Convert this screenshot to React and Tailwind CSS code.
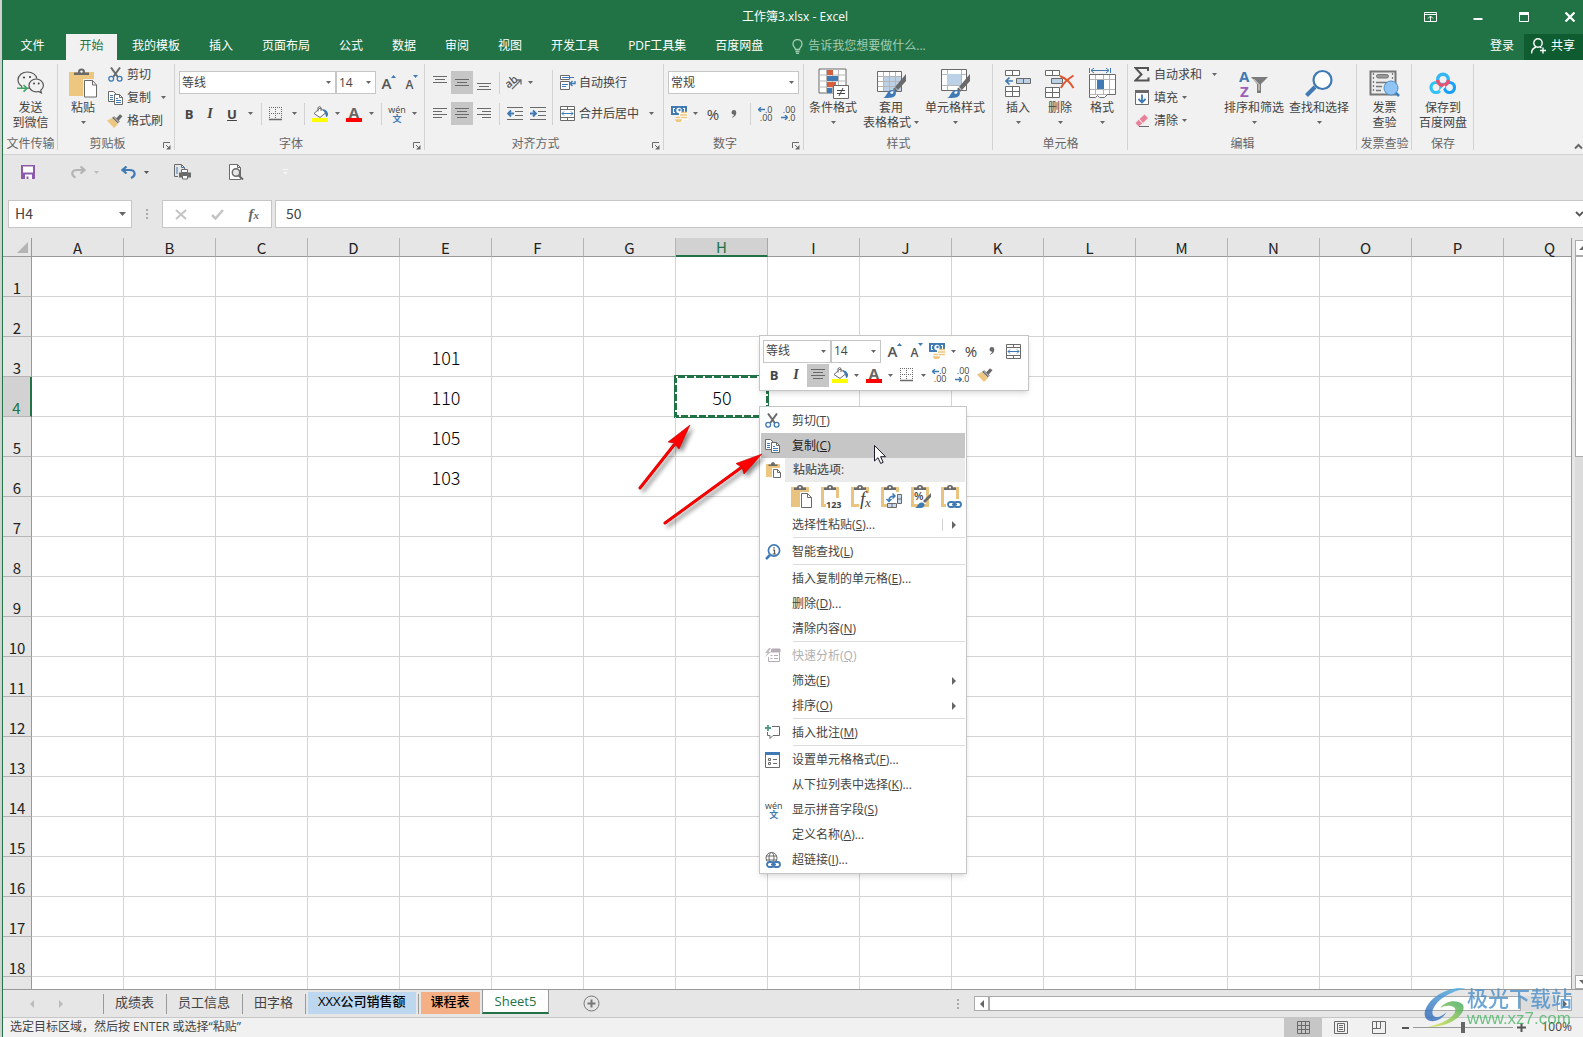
import React from "react";

const GREY = "#6a6a6a";
const BLUE = "#3f7ab5";
const TAN = "#edc67f";

function Icon({ w, h, children, className = "" }) {
  return (
    <svg width={w} height={h} viewBox={`0 0 ${w} ${h}`} fill="none" aria-hidden="true" className={`shrink-0 ${className}`}>
      {children}
    </svg>
  );
}

function Caret({ className = "text-[#666]" }) {
  return (
    <Icon w={5} h={3} className={className}>
      <path d="M0 0h5L2.5 3z" fill="currentColor" />
    </Icon>
  );
}

function Lines({ rows }) {
  return (
    <Icon w={14} h={14}>
      {rows.map(([x1, x2, y]) => (
        <path key={y} d={`M${x1} ${y + 0.5}H${x2}`} stroke={GREY} />
      ))}
    </Icon>
  );
}

const alignTop = [[0, 14, 0], [2, 12, 3], [0, 14, 6]];
const alignMid = [[0, 14, 3], [2, 12, 6], [0, 14, 9]];
const alignBottom = [[0, 14, 7], [2, 12, 10], [0, 14, 13]];
const alignLeft = [[0, 14, 1], [0, 9, 4], [0, 14, 7], [0, 9, 10]];
const alignCenter = [[0, 14, 1], [2, 12, 4], [0, 14, 7], [2, 12, 10]];
const alignRight = [[0, 14, 1], [5, 14, 4], [0, 14, 7], [5, 14, 10]];

function Scissors() {
  return (
    <Icon w={15} h={15}>
      <path d="M3 0.5L9.8 10M12 0.5L5.2 10" stroke={GREY} strokeWidth="2" />
      <circle cx="3.2" cy="11.8" r="2.4" stroke={BLUE} strokeWidth="1.3" />
      <circle cx="11.6" cy="11.8" r="2.4" stroke={BLUE} strokeWidth="1.3" />
    </Icon>
  );
}

function Copy() {
  return (
    <Icon w={15} h={14}>
      <path d="M0.5 0.5h5l3 3v7h-8z" fill="#fff" stroke={GREY} />
      <path d="M2 4.5h3M2 6.5h3M2 8.5h3" stroke={BLUE} />
      <path d="M6.5 3.5h5l3 3v7h-8z" fill="#fff" stroke={GREY} />
      <path d="M11.5 3.5v3h3" stroke={GREY} />
      <path d="M8 7.5h2M8 9.5h5M8 11.5h5" stroke={BLUE} />
    </Icon>
  );
}

function Brush() {
  return (
    <Icon w={16} h={14}>
      <path d="M0 6.5L5 4l6 6-4 4z" fill={TAN} />
      <path d="M5 3.8l2.2-1.5 5.6 5.3-1.9 2z" fill={GREY} />
      <path d="M9 4.5L13 0.3l2.5 2-4 4.4z" fill={GREY} />
      <path d="M6.6 3l5.4 5.4" stroke="#fff" strokeWidth="0.7" />
    </Icon>
  );
}

function PasteBig() {
  return (
    <Icon w={29} h={31}>
      <path d="M0 4h25v24H0z" fill={TAN} />
      <path d="M5 7V4.5h4C9 1.5 10 0.5 12.5 0.5S16 1.5 16 4.5h4V7z" fill={GREY} />
      <circle cx="12.5" cy="3.6" r="1.2" fill="#fff" />
      <path d="M14 11h11l4 4v16H14z" fill="#f1f1f1" />
      <path d="M15.5 12.5h8l4 4.5v12h-12z" fill="#fff" stroke={GREY} />
      <path d="M23.5 12.5V17h4" stroke={GREY} />
    </Icon>
  );
}

function PasteSmall() {
  return (
    <Icon w={15} h={16}>
      <path d="M0 2h14v13H0z" fill={TAN} />
      <path d="M2.500 4V2.500H5C5 0.800 5.800 0.300 7 0.300S9 0.800 9 2.500h2.500V4z" fill={GREY} />
      <path d="M6 6h9v10H6z" fill="#fff" />
      <path d="M7.500 7.500h4l3 3v5h-7z M11.500 7.500v3h3" fill="#fff" stroke={GREY} />
    </Icon>
  );
}

function WeChat() {
  return (
    <Icon w={28} h={26}>
      <path d="M5 15.500C2.500 13.800 1 11.500 1 9c0-4.600 4.300-8 9.500-8 4.800 0 8.700 2.800 9.400 6.600" stroke="#555" strokeWidth="1.200" />
      <path d="M8.500 17.200c2 .3 3 .1 3.800-.2M5 15.500L4.500 17" stroke="#555" strokeWidth="1.200" />
      <path d="M12 14.500c0-3.700 3.300-6.500 7.200-6.500s7.200 2.800 7.200 6.500c0 2.200-1.100 3.700-2.600 4.800l.6 2.600-3-1.400c-5 1.300-9.400-2-9.400-6z" stroke="#555" strokeWidth="1.200" />
      <circle cx="7" cy="6.500" r="1" fill="#333" />
      <circle cx="13" cy="6" r="1" fill="#333" />
      <circle cx="17" cy="12.500" r="0.900" fill="#333" />
      <circle cx="21.700" cy="12.500" r="0.900" fill="#333" />
      <path d="M0 17.300h9.500M6.500 14l3.500 3.300-3.500 3.300" stroke="#3fa565" strokeWidth="1.600" />
    </Icon>
  );
}

function Borders() {
  return (
    <Icon w={14} h={14}>
      <path d="M0.500 0v13M6.500 0v13M12.500 0v13M0 0.500h13M0 6.500h13" stroke={GREY} strokeDasharray="1 1" />
      <path d="M0 12.500h13" stroke={GREY} strokeWidth="1.500" />
    </Icon>
  );
}

function Bucket() {
  return (
    <Icon w={17} h={16}>
      <path d="M2 7.500L8 2l6 4.500-6 5z" fill="#fff" stroke={GREY} />
      <path d="M6 5.500V2C6 .2 9 .2 9 2v3" stroke={GREY} />
      <path d="M10.500 3.200c3.500 0 5 2.300 5.500 4.300.3 1.500-.5 3.500-1.700 3.500-.9-2-1-4.500-3.800-7.800z" fill={BLUE} />
      <path d="M0 12h16v4H0z" fill="#ffff00" />
    </Icon>
  );
}

function FontColor() {
  return (
    <span className="flex w-4 shrink-0 flex-col items-center">
      <span className="h-3 text-[15px] leading-3 font-bold text-[#666]">A</span>
      <span className="h-1 w-4 bg-[#ff0000]" />
    </span>
  );
}

function Pinyin() {
  return (
    <span className="flex shrink-0 flex-col items-center">
      <span className="h-2 text-[9px] leading-[8px] text-[#444]">wén</span>
      <span className="h-2 text-[9px] leading-[9px] font-bold text-[#3f7ab5]">文</span>
    </span>
  );
}

function GrowFont({ shrink }) {
  return (
    <span className="flex shrink-0 items-start text-[#555]">
      <span className={shrink ? "pt-1 text-[12px] leading-[12px] font-semibold" : "text-[15px] leading-4 font-semibold"}>A</span>
      <Icon w={5} h={3} className="text-[#3f7ab5]">
        <path d={shrink ? "M0 0h5L2.500 3z" : "M0 3h5L2.500 0z"} fill="currentColor" />
      </Icon>
    </span>
  );
}

function Money() {
  return (
    <Icon w={17} h={16}>
      <path d="M0 0h16v9H0z" fill={BLUE} />
      <path d="M2 2h2v1H3v3h1v1H2zM14 2h-2v1h1v3h-1v1h2z" fill="#fff" />
      <circle cx="8" cy="4.500" r="2.700" fill="#fff" />
      <circle cx="8.500" cy="4" r="1.200" fill={BLUE} />
      <path d="M8 6h9v8h-5v2H4v-5h4z" fill="#fff" />
      <path d="M10 6.500h6M9 9h7M10 11.500h6M4.500 11.500h5M4 14h7M5 15.500h5" stroke={TAN} strokeWidth="1.500" />
    </Icon>
  );
}

function ArrowGlyph({ left }) {
  return (
    <Icon w={7} h={5}>
      <path d={left ? "M0.500 2.500H7M3 0L0.500 2.500 3 5" : "M0 2.500h6.500M4 0l2.500 2.500L4 5"} stroke={BLUE} strokeWidth="1.300" />
    </Icon>
  );
}

function Decimals({ more }) {
  return (
    <span className="flex w-[15px] shrink-0 flex-col text-[9px] leading-[8px] font-medium text-[#444]">
      <span className="flex items-center justify-end">
        {more && <ArrowGlyph left />}
        {more ? ".0" : ".00"}
      </span>
      <span className="flex items-center justify-end">
        {!more && <ArrowGlyph />}
        {more ? ".00" : ".0"}
      </span>
    </span>
  );
}

function Comma() {
  return (
    <Icon w={6} h={8}>
      <path d="M0.500 2.500a2.300 2.300 0 0 1 4.800 0c0 2.500-1.500 4.200-4 5.200l-.3-.8c1.300-.6 2-1.300 2-2.200C1.500 4.700.500 3.800.500 2.500z" fill={GREY} />
    </Icon>
  );
}

function Indent({ left }) {
  return (
    <Icon w={17} h={14}>
      <path d="M0 0.500h16M8 4.500h8M8 8.500h8M0 12.500h16" stroke={GREY} />
      <path d={left ? "M1 6.500h6M4 3.500L1 6.500l3 3" : "M0 6.500h6M3 3.500l3 3-3 3"} stroke={BLUE} strokeWidth="1.800" />
    </Icon>
  );
}

function Orientation() {
  return (
    <Icon w={17} h={15}>
      <text x="0" y="11" fontSize="11" fontWeight="600" fill="#555" transform="rotate(-38 5 9)">ab</text>
      <path d="M6 14L15 5M10.500 5H15v4.500" stroke={GREY} strokeWidth="1.300" />
    </Icon>
  );
}

function Wrap() {
  return (
    <Icon w={16} h={15}>
      <path d="M0.500 0.500h9v4h-9zM0.500 6.500h9v8h-9z" fill="#fff" stroke={GREY} />
      <path d="M2 2.500h12M2 9.500h6M2 11.500h4" stroke={BLUE} />
      <path d="M15 6v2.500h-5M12.500 6L10 8.500l2.500 2.500" stroke={BLUE} strokeWidth="1.400" />
    </Icon>
  );
}

function Merge() {
  return (
    <Icon w={15} h={15}>
      <path d="M0.500 0.500h14v14h-14zM0.500 3.500h14M0.500 11.500h14M7.500 0v3.500M7.500 11.500V15" fill="#fff" stroke={GREY} />
      <path d="M2 7.500h11M4 5.500l-2 2 2 2M11 5.500l2 2-2 2" stroke={BLUE} />
    </Icon>
  );
}

function Conditional() {
  return (
    <Icon w={31} h={31}>
      <path d="M1 1h27v24H1z" fill="#fff" stroke={GREY} />
      <path d="M8.500 1v24M14.500 1v24M20.500 1v24M1 7h27M1 13h27M1 19h27" stroke="#b5b5b5" />
      <path d="M9 2h6v5H9z M9 14h9v5H9z" fill="#d65f3c" />
      <path d="M9 8h11v5H9z M9 20h5v5H9z" fill={BLUE} />
      <path d="M15.500 17.500h15v13h-15z" fill="#fff" stroke={GREY} />
      <path d="M19 22.500h8M19 25.500h8M25 20l-4 8" stroke="#444" />
    </Icon>
  );
}

function PaintBrush() {
  return (
    <>
      <path d="M30 6v7l-8 9-3-3z" fill={GREY} />
      <path d="M18.500 19.500l3 3-1.500 1.500-3-3z" fill={GREY} />
      <path d="M7 30c4-1 4-9 10-8 5 1 3 7-1 7.500-3 .5-6 .5-9 .5z" fill={BLUE} />
      <path d="M14 25c1-2 3-2 4-1-1 0-1 2-2 2z" fill="#fff" />
    </>
  );
}

function TableStyle() {
  return (
    <Icon w={31} h={31}>
      <path d="M1.500 3.500h24v20h-24z" fill="#fff" stroke={GREY} />
      <path d="M8 9h17v14H8z" fill="#bcd0e6" />
      <path d="M7.500 4v19M13.500 4v19M19.500 4v19M2 8.500h23M2 13.500h23M2 18.500h23" stroke="#b5b5b5" />
      <PaintBrush />
    </Icon>
  );
}

function CellStyle() {
  return (
    <Icon w={31} h={31}>
      <path d="M1.500 1.500h25v21h-25z" fill="#fff" stroke={GREY} />
      <path d="M7.500 2v20M21.500 2v20M2 6.500h24M2 17.500h24" stroke="#b5b5b5" />
      <path d="M7 6h14v11H7z" fill="#bcd0e6" />
      <PaintBrush />
    </Icon>
  );
}

function InsertCells() {
  return (
    <Icon w={27} h={30}>
      <path d="M0.500 1.500h14v5h-14zM7.500 1.500v5M0.500 17.500h14v10h-14zM7.500 17.500v10M0.500 22.500h14" fill="#fff" stroke={GREY} />
      <path d="M11.500 9.500h14v5h-14zM18.500 9.500v5" fill="#bcd0e6" stroke={GREY} />
      <path d="M1 12h7M4.500 8.500L1 12l3.500 3.500" stroke={BLUE} strokeWidth="1.700" />
    </Icon>
  );
}

function DeleteCells() {
  return (
    <Icon w={30} h={30}>
      <path d="M0.500 1.500h14v5h-14zM7.500 1.500v5M0.500 18.500h14v10h-14zM7.500 18.500v10M0.500 23.500h14" fill="#fff" stroke={GREY} />
      <path d="M6.500 9.500h11v5h-11z" fill="#bcd0e6" stroke={GREY} />
      <path d="M15 7c5 2 10 6 13.500 12M28.500 6.500C23 10 18 14 16 19" stroke="#e0562f" strokeWidth="2" />
    </Icon>
  );
}

function FormatCells() {
  return (
    <Icon w={29} h={31}>
      <path d="M1.500 0v5M22.500 0v5M3 2.500h18M6 0L3 2.500 6 5M18 0l3 2.500L18 5" stroke={BLUE} />
      <path d="M1.500 6.500h26v20h-26z" fill="#fff" stroke={GREY} />
      <path d="M7.500 7v19M15.500 7v19M21.500 7v19M2 11.500h25M2 21.500h25" stroke="#b5b5b5" />
      <path d="M9 12h7v9H9z" fill={BLUE} />
      <path d="M1.500 26.500v3h6l2-2 2 2h5l3-3" fill="#fff" stroke={GREY} />
    </Icon>
  );
}

function SortFilter() {
  return (
    <Icon w={30} h={30}>
      <text x="0" y="13" fontSize="15" fontWeight="700" fill={BLUE}>A</text>
      <text x="1" y="28" fontSize="15" fontWeight="700" fill="#9a5fb8">Z</text>
      <path d="M12 8h17l-7 7v9h-4v-9z" fill="#7b7b7b" />
      <path d="M14.500 10L20 15.500v6" stroke="#f1f1f1" />
    </Icon>
  );
}

function FindIcon() {
  return (
    <Icon w={28} h={29}>
      <path d="M1.500 26.500L10 18" stroke={BLUE} strokeWidth="4" />
      <circle cx="17.500" cy="11" r="9" fill="#fff" stroke={BLUE} strokeWidth="2.200" />
    </Icon>
  );
}

function Invoice() {
  return (
    <Icon w={31} h={29}>
      <path d="M1.500 2.500h25v23h-25z" fill="#ededed" stroke="#777" strokeWidth="2" />
      <path d="M4.500 4v20M23.500 4v10" stroke="#777" strokeWidth="1.200" strokeDasharray="2 2" />
      <rect x="7.500" y="5.500" width="12" height="3.500" rx="1.700" fill="#999" stroke="#777" />
      <path d="M7 13.500h11M7 17.500h6M7 21.500h5" stroke="#777" strokeWidth="1.400" />
      <path d="M26 23l4 4" stroke="#3b7fb8" strokeWidth="2.500" />
      <circle cx="22" cy="19" r="7" fill="#8fc4f5" stroke="#4c8fc8" />
    </Icon>
  );
}

function BaiduDisk() {
  return (
    <Icon w={28} h={23}>
      <circle cx="7" cy="15.500" r="5" stroke="#2fc3f5" strokeWidth="3.200" />
      <circle cx="20.500" cy="15.500" r="5" stroke="#16a0f8" strokeWidth="3.200" />
      <circle cx="14" cy="7.500" r="5.300" stroke="#35b5f2" strokeWidth="3.400" />
      <path d="M8.700 8a5.300 5.300 0 0 0 10.600 0" stroke="#f0506a" strokeWidth="3.400" />
      <path d="M11 19l5-5" stroke="#f1f1f1" strokeWidth="2" />
    </Icon>
  );
}

function Sigma() {
  return (
    <Icon w={16} h={15}>
      <path d="M14 4V1H1.500l6 6.500-6 6H14.500v-3" stroke="#555" strokeWidth="2" />
    </Icon>
  );
}

function Fill() {
  return (
    <Icon w={14} h={15}>
      <path d="M0.500 0.500h13v14h-13z" fill="#fff" stroke={GREY} />
      <path d="M0 0h14v3H0z" fill={GREY} />
      <path d="M7 4.500v8M3.500 9L7 12.500 10.500 9" stroke={BLUE} strokeWidth="1.800" />
    </Icon>
  );
}

function Eraser() {
  return (
    <Icon w={15} h={14}>
      <path d="M4.500 5L9.500 0.500 13 4 8 9z" fill="#e8829a" />
      <path d="M3.800 5.700L0.500 9 3.500 12.500 7.300 9.500z" fill="#e8829a" />
      <path d="M4 12.500h10" stroke={GREY} />
    </Icon>
  );
}

function Launcher() {
  return (
    <Icon w={8} h={8}>
      <path d="M0.500 6V0.500H7M3 3l3 3" stroke={GREY} />
      <path d="M7.500 3v4.500H3z" fill={GREY} />
    </Icon>
  );
}

function Group({ width, label, launcher, children }) {
  return (
    <section className={`relative flex shrink-0 flex-col ${width}`} aria-label={label}>
      <div className="flex h-[76px]">{children}</div>
      <div className={`text-center leading-4 text-[#666] ${launcher ? "pr-[18px]" : ""}`}>{label}</div>
      {launcher && (
        <button aria-label={`${label}设置`} className="absolute right-1 bottom-1">
          <Launcher />
        </button>
      )}
      <span className="absolute top-1 right-0 bottom-1 w-px bg-[#d2d2d2]" />
    </section>
  );
}

function BigButton({ icon, line1, line2, arrow, width }) {
  return (
    <button className={`flex shrink-0 flex-col items-center pt-[7px] whitespace-nowrap ${width}`}>
      <span className="flex h-[33px] items-center">{icon}</span>
      <span className="leading-[15px]">{line1}</span>
      <span className="flex h-[15px] items-center gap-[3px] leading-[15px]">
        {line2}
        {arrow && <Caret />}
      </span>
    </button>
  );
}

function SmallButton({ icon, text, arrow }) {
  return (
    <button className="flex h-[23px] items-center gap-1 whitespace-nowrap">
      <span className="flex w-4 justify-center">{icon}</span>
      {text}
      {arrow && <Caret className={arrow} />}
    </button>
  );
}

function Tool({ label, width = "w-[22px]", active, children }) {
  return (
    <button
      aria-label={label}
      className={`flex h-[23px] shrink-0 items-center justify-center ${width} ${active ? "bg-[#c6c6c6]" : ""}`}
    >
      {children}
    </button>
  );
}

function Sep() {
  return <span className="h-[22px] w-px shrink-0 bg-[#d2d2d2]" />;
}

function Combo({ label, value, width }) {
  return (
    <span className={`relative flex h-[23px] shrink-0 items-center border border-[#c6c6c6] bg-white ${width}`}>
      <select aria-label={label} className="h-full w-full appearance-none bg-transparent pl-[2px] text-[#444] outline-none">
        <option>{value}</option>
      </select>
      <span className="pointer-events-none absolute right-1">
        <Caret />
      </span>
    </span>
  );
}

function TitleBar() {
  return (
    <header className="relative flex h-[34px] shrink-0 items-center justify-end bg-[#217346] pr-2 text-white">
      <h1 className="absolute inset-x-0 pl-1 text-center leading-[34px]">工作簿3.xlsx - Excel</h1>
      <div className="relative flex items-center gap-[36px]">
        <button aria-label="功能区显示选项">
          <Icon w={13} h={10}>
            <path d="M0.500 0.500h12v9h-12zM0.500 2.500h12M6.500 9V4.500M4 6.500L6.500 4 9 6.500" stroke="#fff" />
          </Icon>
        </button>
        <button aria-label="最小化">
          <Icon w={10} h={10}>
            <path d="M0.500 7h9" stroke="#fff" strokeWidth="2" />
          </Icon>
        </button>
        <button aria-label="最大化">
          <Icon w={10} h={10}>
            <path d="M0.500 0.500h9v9h-9z" stroke="#fff" />
            <path d="M0 0h10v3H0z" fill="#fff" />
          </Icon>
        </button>
        <button aria-label="关闭">
          <Icon w={10} h={10}>
            <path d="M0.500 0.500l9 9M9.500 0.500l-9 9" stroke="#fff" strokeWidth="2.200" />
          </Icon>
        </button>
      </div>
    </header>
  );
}

const tabs = ["我的模板", "插入", "页面布局", "公式", "数据", "审阅", "视图", "开发工具", "PDF工具集", "百度网盘"];

function TabBar() {
  return (
    <nav className="flex h-[26px] shrink-0 items-center bg-[#217346] whitespace-nowrap text-white">
      <button className="w-[63px] pr-1 pb-[2px]">文件</button>
      <button className="h-full w-[51px] bg-[#f1f1f1] pb-[2px] text-[#217346]">开始</button>
      <div className="flex gap-[29px] pb-[2px] pl-[15px]">
        {tabs.map((t) => (
          <button key={t}>{t}</button>
        ))}
        <button className="flex items-center gap-[5px] text-[#a3cdb3]">
          <Icon w={11} h={15}>
            <path d="M3.500 10.500C3.500 8.500 1 8 1 5a4.500 4.500 0 0 1 9 0c0 3-2.500 3.500-2.500 5.500zM3.500 12.500h4M4 14.300h3" stroke="currentColor" strokeWidth="1.300" />
          </Icon>
          告诉我您想要做什么...
        </button>
      </div>
      <button className="mr-[10px] ml-auto pb-[2px]">登录</button>
      <button className="flex h-full w-[59px] items-center gap-[5px] bg-[#0f5c30] pb-[2px] pl-[7px]">
        <Icon w={15} h={16}>
          <circle cx="7" cy="5" r="4.200" stroke="#fff" strokeWidth="1.400" />
          <path d="M0.500 15.500C0.500 12 2.500 10 5 9M9 9l1.500 1M12 9.500v6M9 12.500h6" stroke="#fff" strokeWidth="1.400" />
        </Icon>
        共享
      </button>
    </nav>
  );
}

function Ribbon() {
  return (
    <div className="relative flex h-[95px] shrink-0 border-b border-[#d2d2d2] bg-[#f1f1f1] text-[#444]">
      <Group width="w-[55px]" label="文件传输">
        <BigButton width="w-full" icon={<WeChat />} line1="发送" line2="到微信" />
      </Group>

      <Group width="w-[117px]" label="剪贴板" launcher>
        <BigButton width="w-[50px]" icon={<PasteBig />} line1="粘贴" arrow />
        <div className="flex flex-col items-start pt-[3px] -ml-px">
          <SmallButton icon={<Scissors />} text="剪切" />
          <SmallButton icon={<Copy />} text="复制" arrow="ml-[6px] text-[#666]" />
          <SmallButton icon={<Brush />} text="格式刷" />
        </div>
      </Group>

      <Group width="w-[250px]" label="字体" launcher>
        <div className="flex flex-col pt-[7px] pl-1">
          <div className="flex h-[31px] items-center">
            <Combo label="字体" value="等线" width="w-[157px]" />
            <Combo label="字号" value="14" width="w-[40px]" />
            <Tool label="增大字号" width="w-[26px]"><GrowFont /></Tool>
            <Tool label="减小字号" width="w-[20px]"><GrowFont shrink /></Tool>
          </div>
          <div className="flex h-[31px] items-center">
            <Tool label="加粗" width="w-5"><b className="text-[13px] text-[#444]">B</b></Tool>
            <Tool label="倾斜"><i className="font-['Liberation_Serif',serif] text-[14px] font-bold text-[#444]">I</i></Tool>
            <Tool label="下划线"><b className="text-[13px] text-[#444] underline">U</b></Tool>
            <Tool label="下划线选项" width="w-[14px]"><Caret /></Tool>
            <span className="w-1" />
            <Sep />
            <Tool label="边框" width="w-7"><Borders /></Tool>
            <Tool label="边框选项" width="w-2"><Caret /></Tool>
            <span className="w-[6px]" />
            <Sep />
            <Tool label="填充颜色" width="w-[30px]"><Bucket /></Tool>
            <Tool label="填充颜色选项" width="w-1"><Caret /></Tool>
            <Tool label="字体颜色" width="w-[30px]"><FontColor /></Tool>
            <Tool label="字体颜色选项" width="w-1"><Caret /></Tool>
            <span className="w-2" />
            <Sep />
            <Tool label="拼音" width="w-[30px]"><Pinyin /></Tool>
            <Tool label="拼音选项" width="w-1"><Caret /></Tool>
          </div>
        </div>
      </Group>

      <Group width="w-[239px]" label="对齐方式" launcher>
        <div className="flex flex-col pt-[7px] pl-1">
          <div className="flex h-[31px] items-center">
            <Tool label="顶端对齐"><Lines rows={alignTop} /></Tool>
            <Tool label="垂直居中" active><Lines rows={alignMid} /></Tool>
            <Tool label="底端对齐"><Lines rows={alignBottom} /></Tool>
            <span className="w-1" />
            <Sep />
            <Tool label="方向" width="w-[28px]"><Orientation /></Tool>
            <Tool label="方向选项" width="w-1"><Caret /></Tool>
          </div>
          <div className="flex h-[31px] items-center">
            <Tool label="左对齐"><Lines rows={alignLeft} /></Tool>
            <Tool label="居中" active><Lines rows={alignCenter} /></Tool>
            <Tool label="右对齐"><Lines rows={alignRight} /></Tool>
            <span className="w-1" />
            <Sep />
            <Tool label="减少缩进量" width="w-[30px]"><Indent left /></Tool>
            <Tool label="增加缩进量" width="w-4"><Indent /></Tool>
          </div>
        </div>
        <span className="mt-[10px] ml-[6px] h-[55px] w-px bg-[#d2d2d2]" />
        <div className="flex flex-col pt-[7px] pl-[7px]">
          <button className="flex h-[31px] items-center gap-[3px]"><Wrap />自动换行</button>
          <button className="flex h-[31px] items-center gap-1"><Merge />合并后居中<Caret className="ml-[6px] text-[#666]" /></button>
        </div>
      </Group>

      <Group width="w-[140px]" label="数字" launcher>
        <div className="flex flex-col pt-[7px] pl-1">
          <div className="flex h-[31px] items-center">
            <Combo label="数字格式" value="常规" width="w-[131px]" />
          </div>
          <div className="flex h-[31px] items-center">
            <Tool label="会计数字格式"><Money /></Tool>
            <Tool label="会计数字格式选项" width="w-[10px]"><Caret /></Tool>
            <Tool label="百分比样式" width="w-[26px]"><span className="text-[15px]">%</span></Tool>
            <Tool label="千位分隔样式" width="w-4"><Comma /></Tool>
            <span className="w-2" />
            <Sep />
            <Tool label="增加小数位数" width="w-7"><Decimals more /></Tool>
            <Tool label="减少小数位数" width="w-[18px]"><Decimals /></Tool>
          </div>
        </div>
      </Group>

      <Group width="w-[189px]" label="样式">
        <BigButton width="w-[58px]" icon={<Conditional />} line1="条件格式" arrow />
        <BigButton width="w-[58px]" icon={<TableStyle />} line1="套用" line2="表格格式" arrow />
        <BigButton width="w-[70px]" icon={<CellStyle />} line1="单元格样式" arrow />
      </Group>

      <Group width="w-[135px]" label="单元格">
        <BigButton width="ml-1 w-[42px]" icon={<InsertCells />} line1="插入" arrow />
        <BigButton width="w-[42px]" icon={<DeleteCells />} line1="删除" arrow />
        <BigButton width="w-[42px]" icon={<FormatCells />} line1="格式" arrow />
      </Group>

      <Group width="w-[229px]" label="编辑">
        <div className="flex w-[94px] flex-col items-start pt-[3px] pl-[6px]">
          <SmallButton icon={<Sigma />} text="自动求和" arrow="ml-[6px] text-[#666]" />
          <SmallButton icon={<Fill />} text="填充" arrow="text-[#666]" />
          <SmallButton icon={<Eraser />} text="清除" arrow="text-[#666]" />
        </div>
        <BigButton width="w-16" icon={<SortFilter />} line1="排序和筛选" arrow />
        <BigButton width="w-[66px]" icon={<FindIcon />} line1="查找和选择" arrow />
      </Group>

      <Group width="w-[55px]" label="发票查验">
        <BigButton width="w-full" icon={<Invoice />} line1="发票" line2="查验" />
      </Group>

      <Group width="w-[62px]" label="保存">
        <BigButton width="w-full" icon={<BaiduDisk />} line1="保存到" line2="百度网盘" />
      </Group>

      <button aria-label="折叠功能区" className="absolute right-0 bottom-1">
        <Icon w={9} h={7}>
          <path d="M1 5.500l3.500-3.500L8 5.500" stroke={GREY} strokeWidth="2" />
        </Icon>
      </button>
    </div>
  );
}

function QuickAccess() {
  return (
    <div className="flex h-[34px] shrink-0 items-center bg-[#e6e6e6] pl-[18px]">
      <button aria-label="保存">
        <Icon w={14} h={14}>
          <path d="M0 0h14v14H0z" fill="#8c5bab" />
          <path d="M2 1.500h10v6H2zM4 9.500h7V14H4z" fill="#fff" />
          <path d="M5.500 11.500h2V14h-2z" fill="#8c5bab" />
        </Icon>
      </button>
      <button aria-label="恢复" className="ml-9 flex items-center gap-2">
        <Icon w={15} h={13}>
          <path d="M4.500 11.500C0 9.500 0 4 6 4h7M9.500 0.500L13.500 4l-4 3.500" stroke="#b4b4b4" strokeWidth="2.200" />
        </Icon>
        <Caret className="text-[#bbb]" />
      </button>
      <button aria-label="撤消" className="ml-[22px] flex items-center gap-2">
        <Icon w={15} h={13}>
          <path d="M10 12c5-2 5-8-1.500-8H2M5.500 0.500L1.500 4l4 3.500" stroke={BLUE} strokeWidth="2.200" />
        </Icon>
        <Caret className="text-[#555]" />
      </button>
      <button aria-label="快速打印" className="ml-[25px]">
        <Icon w={17} h={16}>
          <path d="M0.500 0.500h7l3 3v3M4 12.500H0.500v-12" fill="none" stroke={GREY} />
          <path d="M3 3v7M7.500 0.500v3h3" stroke={BLUE} />
          <path d="M7.500 5.500h6v3h-6z" fill="#fff" stroke={GREY} />
          <path d="M5 8.500h12v5H5z" fill={GREY} />
          <path d="M8.500 11.500h5v3.500h-5z" fill="#fff" stroke={GREY} />
        </Icon>
      </button>
      <button aria-label="打印预览" className="ml-[38px]">
        <Icon w={15} h={16}>
          <path d="M0.500 0.500h8l3 3v12h-11z" fill="#fff" stroke={GREY} />
          <path d="M8.500 0.500v3h3" stroke={GREY} />
          <circle cx="7" cy="8.500" r="3.700" fill="#e6e6e6" stroke={GREY} strokeWidth="1.500" />
          <path d="M9.500 11.500l4.500 4" stroke={GREY} strokeWidth="2" />
        </Icon>
      </button>
      <button aria-label="自定义快速访问工具栏" className="ml-[39px]">
        <Icon w={5} h={6}>
          <path d="M0 0h5v1H0zM0 3h5L2.500 5.500z" fill="#f6f6f6" />
        </Icon>
      </button>
    </div>
  );
}

function Dots() {
  return (
    <Icon w={2} h={10}>
      <path d="M0 0h2v2H0zM0 4h2v2H0zM0 8h2v2H0z" fill="#aaa" />
    </Icon>
  );
}

function FormulaBar() {
  return (
    <div className="mt-[11px] mb-[10px] flex h-7 shrink-0 items-center pl-[5px] text-[14px] text-[#444]">
      <div className="flex h-full w-[124px] items-center border border-[#c6c6c6] bg-white pr-[5px]">
        <input aria-label="名称框" defaultValue="H4" className="w-full min-w-0 bg-transparent pb-[2px] pl-[6px] outline-none" />
        <button aria-label="名称列表">
          <Icon w={7} h={4}>
            <path d="M0 0h7L3.500 4z" fill="#666" />
          </Icon>
        </button>
      </div>
      <span className="flex w-[30px] justify-center"><Dots /></span>
      <div className="flex h-full w-[110px] items-center justify-around border border-[#c6c6c6] bg-white">
        <button aria-label="取消">
          <Icon w={12} h={11}>
            <path d="M1 1l10 9M11 1L1 10" stroke="#c4c4c4" strokeWidth="2" />
          </Icon>
        </button>
        <button aria-label="输入">
          <Icon w={13} h={11}>
            <path d="M1 6l3.500 3.500L12 1" stroke="#c4c4c4" strokeWidth="2.500" />
          </Icon>
        </button>
        <button aria-label="插入函数" className="font-['Liberation_Serif',serif] text-[15px] font-bold text-[#666] italic">
          f<span className="text-[11px]">x</span>
        </button>
      </div>
      <div className="ml-[3px] flex h-full flex-1 items-center border-y border-l border-[#c6c6c6] bg-white">
        <input aria-label="编辑栏" defaultValue="50" className="flex-1 bg-transparent pb-[2px] pl-[10px] outline-none" />
        <button aria-label="展开编辑栏">
          <Icon w={8} h={6}>
            <path d="M1 1l3.500 3.500L8 1" stroke="#555" strokeWidth="1.800" />
          </Icon>
        </button>
      </div>
    </div>
  );
}

const columns = "ABCDEFGHIJKLMNOPQ".split("");
const rows = Array.from({ length: 19 }, (_, i) => i + 1);
const values = { E3: "101", E4: "110", E5: "105", E6: "103", H4: "50" };

function MarchingAnts() {
  return (
    <svg width="95" height="43" viewBox="0 0 95 43" className="absolute -top-[2px] -left-[2px]" aria-hidden="true">
      <rect x="1.500" y="1.500" width="92" height="40" fill="none" stroke="#217346" strokeWidth="3" />
      <rect x="2" y="2" width="91" height="39" fill="none" stroke="#fff" strokeWidth="2" strokeDasharray="2 7" />
    </svg>
  );
}

function Sheet() {
  return (
    <div className="min-w-0 flex-1 overflow-hidden border-r border-[#999] bg-white">
      <table className="w-[1593px] table-fixed border-separate border-spacing-0">
        <colgroup>
          <col className="w-[29px]" />
          {columns.map((c) => (
            <col key={c} className="w-[92px]" />
          ))}
        </colgroup>
        <thead>
          <tr className="h-[19px]">
            <th aria-label="全选" className="border-r border-b border-[#999] bg-[#e6e6e6] p-0">
              <Icon w={11} h={11} className="mt-px ml-[14px]">
                <path d="M11 0v11H0z" fill="#b4b4b4" />
              </Icon>
            </th>
            {columns.map((c) => (
              <th
                key={c}
                scope="col"
                className={`h-[19px] border-r p-0 text-[15px] leading-[17px] font-normal ${
                  c === "H" ? "border-r-[#a6a6a6] border-b-2 border-b-[#217346] bg-[#d2d2d2] text-[#217346]" : "border-r-[#b4b4b4] border-b border-b-[#999] bg-[#e6e6e6] text-[#222]"
                }`}
              >
                {c}
              </th>
            ))}
          </tr>
        </thead>
        <tbody>
          {rows.map((r) => (
            <tr key={r} className="h-10">
              <th
                scope="row"
                className={`h-10 border-b border-b-[#b4b4b4] p-0 pb-px align-bottom text-[15px] leading-[15px] font-normal ${
                  r === 4 ? "border-r-2 border-r-[#217346] bg-[#d2d2d2] text-[#217346]" : "border-r border-r-[#999] bg-[#e6e6e6] text-[#222]"
                }`}
              >
                {r}
              </th>
              {columns.map((c) => (
                <td key={c} className="relative h-10 border-r border-b border-[#d4d4d4] p-0 pl-px text-center text-[18px] leading-6 font-light text-black">
                  {values[c + r]}
                  {c === "H" && r === 4 && <MarchingAnts />}
                </td>
              ))}
            </tr>
          ))}
        </tbody>
      </table>
    </div>
  );
}

function MiniToolbar() {
  return (
    <div className="absolute top-[97px] left-[756px] flex w-[270px] flex-col border border-[#c6c6c6] bg-white p-[3px] text-[#444] shadow-md">
      <div className="flex h-6 items-center">
        <Combo label="浮动字体" value="等线" width="w-[68px]" />
        <Combo label="浮动字号" value="14" width="w-[50px]" />
        <Tool label="增大字号" width="w-7"><GrowFont /></Tool>
        <Tool label="减小字号" width="w-4"><GrowFont shrink /></Tool>
        <Tool label="会计数字格式" width="w-[24px]"><Money /></Tool>
        <Tool label="会计数字格式选项" width="w-2"><Caret /></Tool>
        <Tool label="百分比样式" width="w-7"><span className="text-[15px]">%</span></Tool>
        <Tool label="千位分隔样式" width="w-[14px]"><Comma /></Tool>
        <Tool label="合并后居中" width="w-7"><Merge /></Tool>
      </div>
      <div className="flex h-6 items-center">
        <Tool label="加粗"><b className="text-[13px]">B</b></Tool>
        <Tool label="倾斜"><i className="font-['Liberation_Serif',serif] text-[14px] font-bold">I</i></Tool>
        <Tool label="居中" active><Lines rows={alignCenter} /></Tool>
        <Tool label="填充颜色"><Bucket /></Tool>
        <Tool label="填充颜色选项" width="w-[10px]"><Caret /></Tool>
        <Tool label="字体颜色" width="w-[26px]"><FontColor /></Tool>
        <Tool label="字体颜色选项" width="w-[6px]"><Caret /></Tool>
        <Tool label="边框" width="w-7"><Borders /></Tool>
        <Tool label="边框选项" width="w-1"><Caret /></Tool>
        <Tool label="增加小数位数" width="w-[28px]"><Decimals more /></Tool>
        <Tool label="减少小数位数" width="w-[18px]"><Decimals /></Tool>
        <Tool label="格式刷" width="w-7"><Brush /></Tool>
      </div>
    </div>
  );
}

function MenuItem({ icon, text, hotkey, tail = "", active, disabled, submenu, split }) {
  return (
    <button
      disabled={disabled}
      className={`flex h-[25px] w-full items-center text-left ${active ? "bg-[#c6c6c6] text-[#222]" : disabled ? "text-[#b1b1b1]" : "text-[#444]"}`}
    >
      <span className="flex w-[31px] shrink-0 items-center pl-1">{icon}</span>
      <span>
        {text}(<u className="underline-offset-1">{hotkey}</u>){tail}
      </span>
      {submenu && (
        <span className="mr-[9px] ml-auto flex items-center gap-[9px]">
          {split && <span className="h-3 w-px bg-[#d2d2d2]" />}
          <Icon w={4} h={8}>
            <path d="M0 0l4 4-4 4z" fill="#666" />
          </Icon>
        </span>
      )}
    </button>
  );
}

function MenuRule() {
  return <div className="ml-8 h-[2px] border-t border-[#dcdcdc]" />;
}

function ClipBoard({ full, children }) {
  return (
    <Icon w={22} h={24}>
      <path d={full ? "M0 2h18v20H0z" : "M1.500 3.500h15v17h-15z"} fill={full ? "#e9c380" : "#fff"} stroke={full ? "none" : "#e9c380"} strokeWidth="3" />
      <path d="M3 5V2.500h3C6 0.800 7.200 0 9 0s3 .8 3 2.500h3V5z" fill={GREY} />
      <circle cx="9" cy="2.500" r="1" fill="#fff" />
      {children}
    </Icon>
  );
}

function Chain({ x, y }) {
  return (
    <g transform={`translate(${x} ${y})`} stroke={BLUE} strokeWidth="1.800">
      <rect x="1" y="1" width="7" height="5" rx="2.500" />
      <rect x="7" y="1" width="7" height="5" rx="2.500" />
      <path d="M5 3.500h5" />
    </g>
  );
}

function PasteOptions() {
  const options = [
    ["粘贴", <ClipBoard full><path d="M9 7h13v17H9z" fill="#fff" /><path d="M10.500 8.500h6l4 4v10h-10zM16.500 8.500v4h4" fill="#fff" stroke={GREY} /></ClipBoard>],
    ["值", <ClipBoard><path d="M5 13h17v11H5z" fill="#fff" /><text x="5" y="23" fontSize="9" fontWeight="700" fill="#444">123</text></ClipBoard>],
    ["公式", <ClipBoard><path d="M9 8h12v15H8z" fill="#fff" /><text x="9" y="20" fontSize="19" fontStyle="italic" fontFamily="Liberation Serif" fill="#444">f</text><text x="14" y="22" fontSize="13" fontStyle="italic" fontFamily="Liberation Serif" fill="#444">x</text></ClipBoard>],
    ["转置", <ClipBoard><path d="M7 7h15v17H6z" fill="#fff" /><path d="M16.500 9.500h4v9h-4zM16.500 14h4M6.500 18.500h9v4h-9zM11 18.500v4" fill="#c9dcef" stroke={GREY} /><path d="M8 17v-2c0-3 2-4 6-4M11.500 8.500L14 11l-2.500 2.500M5.500 14L8 16.500l2.500-2.500" stroke={BLUE} strokeWidth="1.500" /></ClipBoard>],
    ["格式", <ClipBoard><path d="M3 6h12v10H3z" fill="#fff" /><text x="3" y="15" fontSize="11" fontWeight="600" fill="#444">%</text><path d="M20 8v4l-6 6-2-2z" fill={GREY} /><path d="M4 23c3-1 3-6 7-5.500s3 5-1 5.500z" fill={BLUE} /></ClipBoard>],
    ["粘贴链接", <ClipBoard><path d="M5 14h17v10H5z" fill="#fff" /><Chain x={6} y={16} /></ClipBoard>],
  ];
  return (
    <div className="flex h-[30px] items-center gap-2 pl-[30px]">
      {options.map(([name, icon]) => (
        <button key={name} aria-label={name} className="flex w-[22px]">
          {icon}
        </button>
      ))}
    </div>
  );
}

function ContextMenu() {
  return (
    <div className="absolute top-[168px] left-[756px] w-[208px] border border-[#c6c6c6] bg-white p-px whitespace-nowrap shadow-md">
      <MenuItem icon={<Scissors />} text="剪切" hotkey="T" />
      <MenuItem icon={<Copy />} text="复制" hotkey="C" active />
      <div className="flex h-6 items-stretch">
        <span className="flex w-[24px] items-center pl-[5px]"><PasteSmall /></span>
        <span className="flex flex-1 items-center bg-[#ebebeb] pl-2 font-medium text-[#555]">粘贴选项:</span>
      </div>
      <PasteOptions />
      <MenuItem text="选择性粘贴" hotkey="S" tail="..." submenu split />
      <MenuRule />
      <MenuItem
        icon={
          <Icon w={16} h={16}>
            <path d="M1 15l4-4" stroke={BLUE} strokeWidth="2.500" />
            <circle cx="9" cy="6.500" r="5.600" stroke={BLUE} strokeWidth="1.700" />
            <path d="M9 3v1.500M8 6h1.500v4M7.500 10h3.500" stroke="#555" strokeWidth="1.200" />
          </Icon>
        }
        text="智能查找"
        hotkey="L"
      />
      <MenuRule />
      <MenuItem text="插入复制的单元格" hotkey="E" tail="..." />
      <MenuItem text="删除" hotkey="D" tail="..." />
      <MenuItem text="清除内容" hotkey="N" />
      <MenuRule />
      <MenuItem
        icon={
          <Icon w={16} h={15}>
            <path d="M6 2.500h8.500v11h-11V9" stroke="#b5adb5" />
            <path d="M7 1h8v3H6zM5.500 7.500h2M9 7.500h4M5.500 10.500h2M9 10.500h4" fill="#b5adb5" stroke="#b5adb5" />
            <path d="M4 0L0 5h2.500L0 9l6-5H3.500L6 0z" fill="#c2bac2" />
          </Icon>
        }
        text="快速分析"
        hotkey="Q"
        disabled
      />
      <MenuItem text="筛选" hotkey="E" submenu />
      <MenuItem text="排序" hotkey="O" submenu />
      <MenuRule />
      <MenuItem
        icon={
          <Icon w={16} h={15}>
            <path d="M7 1.500h7.500v9H8l-3 3v-3H2.500V7" stroke={GREY} />
            <path d="M3 0v6M0 3h6" stroke="#4f9c80" strokeWidth="1.800" />
          </Icon>
        }
        text="插入批注"
        hotkey="M"
      />
      <MenuRule />
      <MenuItem
        icon={
          <Icon w={15} h={16}>
            <path d="M0.500 0.500h14v15h-14z" fill="#fff" stroke={GREY} />
            <path d="M0 0h15v3H0z" fill={BLUE} />
            <path d="M3.500 6.500h2v2h-2zM3.500 10.500h2v2h-2zM8 7.500h4M8 11.500h4" stroke={GREY} />
          </Icon>
        }
        text="设置单元格格式"
        hotkey="F"
        tail="..."
      />
      <MenuItem text="从下拉列表中选择" hotkey="K" tail="..." />
      <MenuItem icon={<Pinyin />} text="显示拼音字段" hotkey="S" />
      <MenuItem text="定义名称" hotkey="A" tail="..." />
      <MenuItem
        icon={
          <Icon w={16} h={16}>
            <circle cx="6.500" cy="6" r="5.500" stroke={GREY} />
            <ellipse cx="6.500" cy="6" rx="2.500" ry="5.500" stroke={GREY} />
            <path d="M1 4h11M1 8h11" stroke={GREY} />
            <path d="M1 9.500h15V16H1z" fill="#fff" />
            <Chain x={1} y={9} />
          </Icon>
        }
        text="超链接"
        hotkey="I"
        tail="..."
      />
    </div>
  );
}

function Annotations() {
  return (
    <>
      <svg width="140" height="112" viewBox="630 418 140 112" className="absolute top-[180px] left-[627px] drop-shadow-[3px_3px_2px_rgba(0,0,0,0.45)]" aria-hidden="true">
        <path d="M640 488L674 445" stroke="#d40000" strokeWidth="3" strokeLinecap="round" />
        <path d="M640 488L674 445" stroke="#ff0000" strokeWidth="2" strokeLinecap="round" />
        <path d="M690 425L668 442l6 1 5 6z" fill="#ff0000" stroke="#c00000" strokeWidth="0.600" />
        <path d="M665 523L742 467" stroke="#d40000" strokeWidth="3" strokeLinecap="round" />
        <path d="M665 523L742 467" stroke="#ff0000" strokeWidth="2" strokeLinecap="round" />
        <path d="M762 454L736 463.500l6 4 2 6.500z" fill="#ff0000" stroke="#c00000" strokeWidth="0.600" />
      </svg>
      <svg width="13" height="20" viewBox="0 0 13 20" className="absolute top-[207px] left-[871px]" aria-hidden="true">
        <path d="M0.500 0.500v15.500l3.500-3.300 2.700 5.800 2.500-1.200-2.600-5.600h5z" fill="#fff" stroke="#1a1a2a" />
      </svg>
    </>
  );
}

function ScrollArrow({ d, w, h }) {
  return (
    <Icon w={w} h={h}>
      <path d={d} fill="#666" />
    </Icon>
  );
}

function SheetBar() {
  return (
    <div className="flex h-7 shrink-0 items-center border-t border-[#999] bg-[#e6e6e6] text-[13px] text-[#444]">
      <div className="flex w-[100px] gap-[25px] pl-[27px]">
        <button aria-label="上一个工作表"><Icon w={4} h={8}><path d="M4 0v8L0 4z" fill="#bbb" /></Icon></button>
        <button aria-label="下一个工作表"><Icon w={4} h={8}><path d="M0 0v8l4-4z" fill="#bbb" /></Icon></button>
      </div>
      <div className="flex h-full shrink-0 items-start whitespace-nowrap">
        {["成绩表", "员工信息", "田字格"].map((t) => (
          <button key={t} className="mt-1 h-5 border-l border-[#999] pr-3 pb-1 pl-[11px] leading-4">{t}</button>
        ))}
        <span className="mt-1 h-5 w-px bg-[#999]" />
        <button className="mt-[2px] ml-[2px] h-[22px] bg-[#bdd7ee] px-[10px] pb-[3px] leading-[19px] font-medium text-black">XXX公司销售额</button>
        <span className="mt-1 ml-[2px] h-5 w-px bg-[#999]" />
        <button className="mt-[2px] ml-[2px] h-[22px] bg-[#f4b084] px-[10px] pb-[3px] leading-[19px] font-medium text-black">课程表</button>
        <button className="ml-[2px] h-[24px] border-x border-b-2 border-x-[#999] border-b-[#217346] bg-white px-3 leading-[22px] text-[#217346]">Sheet5</button>
      </div>
      <button aria-label="新工作表" className="ml-[34px]">
        <Icon w={17} h={17}>
          <circle cx="8.500" cy="8.500" r="7.500" stroke="#777" />
          <path d="M8.500 4.500v8M4.500 8.500h8" stroke="#777" strokeWidth="2" />
        </Icon>
      </button>
      <span className="mr-[15px] ml-auto"><Dots /></span>
      <div className="mr-[11px] flex h-[15px] w-[598px] bg-[#dcdcdc]">
        <button aria-label="向左滚动" className="flex w-[15px] items-center justify-center border border-[#aaa] bg-white">
          <ScrollArrow w={4} h={8} d="M4 0v8L0 4z" />
        </button>
        <div className="w-[532px] border border-[#aaa] bg-white" />
        <button aria-label="向右滚动" className="ml-auto flex w-[15px] items-center justify-center border border-[#aaa] bg-white">
          <ScrollArrow w={4} h={8} d="M0 0v8l4-4z" />
        </button>
      </div>
    </div>
  );
}

function StatusBar() {
  return (
    <footer className="flex h-5 shrink-0 items-center border-t border-[#c6c6c6] bg-[#f1f1f1] text-[#444]">
      <span className="pb-[2px] pl-[7px]">选定目标区域，然后按 ENTER 或选择“粘贴”</span>
      <div className="ml-auto flex h-full items-center">
        <button aria-label="普通" className="flex h-full w-[38px] items-center justify-center bg-[#c6c6c6]">
          <Icon w={13} h={13}><path d="M0.500 0.500h12v12h-12zM4.500 0v13M8.500 0v13M0 4.500h13M0 8.500h13" stroke={GREY} /></Icon>
        </button>
        <button aria-label="页面布局" className="flex h-full w-[38px] items-center justify-center">
          <Icon w={14} h={13}><path d="M0.500 0.500h13v12h-13zM3.500 2.500h7v8h-7zM5 4.500h4M5 6.500h4M5 8.500h4" stroke={GREY} /></Icon>
        </button>
        <button aria-label="分页预览" className="flex h-full w-[38px] items-center justify-center">
          <Icon w={14} h={13}><path d="M0.500 0.500h13v12h-13zM4.500 0v7M8.500 0v7.500M0.500 7.500h8" stroke={GREY} /></Icon>
        </button>
        <button aria-label="缩小" className="ml-[4px] h-[2px] w-[7px] bg-[#555]" />
        <input
          type="range"
          aria-label="显示比例"
          defaultValue="50"
          className="mx-1 h-3 w-[100px] appearance-none bg-transparent [&::-webkit-slider-runnable-track]:h-px [&::-webkit-slider-runnable-track]:bg-[#999] [&::-webkit-slider-thumb]:-mt-[5px] [&::-webkit-slider-thumb]:h-[11px] [&::-webkit-slider-thumb]:w-1 [&::-webkit-slider-thumb]:appearance-none [&::-webkit-slider-thumb]:bg-[#666]"
        />
        <button aria-label="放大">
          <Icon w={9} h={9}><path d="M4.500 0v9M0 4.500h9" stroke="#555" strokeWidth="2" /></Icon>
        </button>
        <span className="mr-[11px] ml-[15px] pb-[2px]">100%</span>
      </div>
    </footer>
  );
}

function Watermark() {
  return (
    <div className="pointer-events-none absolute right-[11px] bottom-[9px] flex items-center opacity-80" aria-hidden="true">
      <svg width="43" height="41" viewBox="0 0 44 41">
        <defs>
          <linearGradient id="swirlBlue" x1="0" y1="1" x2="1" y2="0">
            <stop offset="0" stopColor="#2d62b5" />
            <stop offset="1" stopColor="#55b9ea" />
          </linearGradient>
          <linearGradient id="swirlGreen" x1="0" y1="1" x2="1" y2="0">
            <stop offset="0" stopColor="#e3e84a" />
            <stop offset="1" stopColor="#35a55c" />
          </linearGradient>
        </defs>
        <path d="M43 1C28-2 6 8 1 24c-2 8 4 12 11 10 5-1 9-5 11-9-4 4-11 8-14 3C6 20 20 5 43 1z" fill="url(#swirlBlue)" />
        <path d="M17 21c4-7 16-9 22-4 4 4 0 12-9 17-8 5-20 7-26 6 12-2 26-8 28-16 1-6-9-7-15-3z" fill="url(#swirlGreen)" />
      </svg>
      <div className="flex flex-col">
        <span className="text-[21px] leading-[24px] font-medium text-[#4a8fcb]">极光下载站</span>
        <span className="font-['Liberation_Sans',sans-serif] text-[17px] leading-[18px] text-[#4db56a]">www.xz7.com</span>
      </div>
    </div>
  );
}

export default function App() {
  return (
    <div className="relative flex h-screen flex-col overflow-hidden border-l-2 border-[#d0d0d0] font-['Open_Sans','Noto_Sans_CJK_SC',sans-serif] text-[12px] leading-4">
      <div className="flex min-h-0 flex-1 flex-col border-l border-[#217346] bg-[#e6e6e6]">
        <TitleBar />
        <TabBar />
        <Ribbon />
        <QuickAccess />
        <div className="flex shrink-0 flex-col font-['Noto_Sans_CJK_SC',sans-serif]">
          <FormulaBar />
        </div>
        <main className="relative flex min-h-0 flex-1 overflow-hidden">
          <div className="flex min-w-0 flex-1 font-['Noto_Sans_CJK_SC',sans-serif]">
            <Sheet />
          </div>
          <div className="flex w-[11px] shrink-0 flex-col overflow-hidden pt-[2px] pl-[3px]">
            <button aria-label="向上滚动" className="flex h-4 w-4 shrink-0 items-center justify-center border border-[#aaa] bg-white">
              <ScrollArrow w={8} h={4} d="M0 4h8L4 0z" />
            </button>
            <div className="h-[201px] w-4 shrink-0 border border-[#aaa] bg-white" />
            <div className="w-4 flex-1 bg-[#dcdcdc]" />
            <button aria-label="向下滚动" className="flex h-[14px] w-4 shrink-0 items-center justify-center border border-[#aaa] bg-white">
              <ScrollArrow w={8} h={4} d="M0 0h8L4 4z" />
            </button>
          </div>
          <MiniToolbar />
          <ContextMenu />
          <Annotations />
        </main>
        <SheetBar />
        <StatusBar />
      </div>
      <Watermark />
    </div>
  );
}
